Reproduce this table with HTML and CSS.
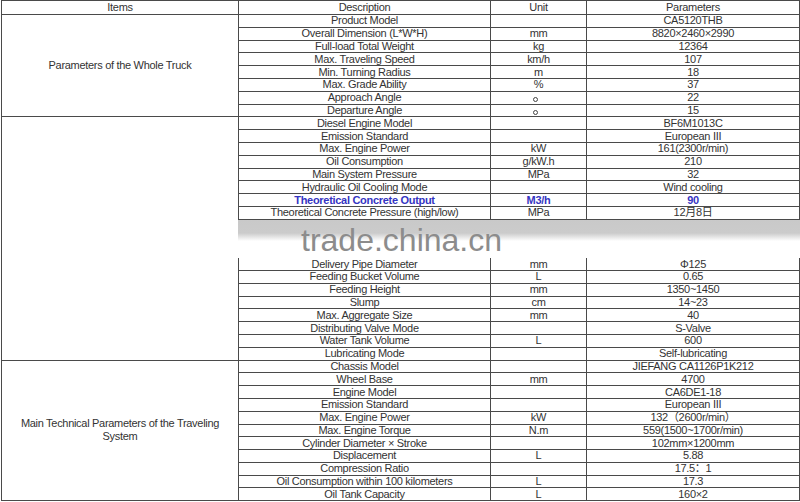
FILE: index.html
```html
<!DOCTYPE html>
<html>
<head>
<meta charset="utf-8">
<link rel="stylesheet" href="styles.css">
</head>
<body>
<div class="sheet">
  <div class="c">Items</div><div class="c d">Description</div><div class="c">Unit</div><div class="c">Parameters</div>

  <div class="c item g1">Parameters of the Whole Truck</div>
  <div class="c d">Product Model</div><div class="c"></div><div class="c">CA5120THB</div>
  <div class="c d">Overall Dimension (L*W*H)</div><div class="c">mm</div><div class="c">8820×2460×2990</div>
  <div class="c d">Full-load Total Weight</div><div class="c">kg</div><div class="c">12364</div>
  <div class="c d">Max. Traveling Speed</div><div class="c">km/h</div><div class="c">107</div>
  <div class="c d">Min. Turning Radius</div><div class="c">m</div><div class="c">18</div>
  <div class="c d">Max. Grade Ability</div><div class="c">%</div><div class="c">37</div>
  <div class="c d">Approach Angle</div><div class="c"><span class="deg" title="。"></span></div><div class="c">22</div>
  <div class="c d">Departure Angle</div><div class="c"><span class="deg" title="。"></span></div><div class="c">15</div>

  <div class="c item g2"></div>
  <div class="c d">Diesel Engine Model</div><div class="c"></div><div class="c">BF6M1013C</div>
  <div class="c d">Emission Standard</div><div class="c"></div><div class="c">European III</div>
  <div class="c d">Max. Engine Power</div><div class="c">kW</div><div class="c">161(2300r/min)</div>
  <div class="c d">Oil Consumption</div><div class="c">g/kW.h</div><div class="c">210</div>
  <div class="c d">Main System Pressure</div><div class="c">MPa</div><div class="c">32</div>
  <div class="c d">Hydraulic Oil Cooling Mode</div><div class="c"></div><div class="c">Wind cooling</div>
  <div class="c d hl">Theoretical Concrete Output</div><div class="c hl">M3/h</div><div class="c hl">90</div>
  <div class="c d">Theoretical Concrete Pressure (high/low)</div><div class="c">MPa</div><div class="c">12月8日</div>
  <div class="band"><span class="wm">trade.china.cn</span></div>
  <div class="c d">Delivery Pipe Diameter</div><div class="c">mm</div><div class="c">Φ125</div>
  <div class="c d">Feeding Bucket Volume</div><div class="c">L</div><div class="c">0.65</div>
  <div class="c d">Feeding Height</div><div class="c">mm</div><div class="c">1350~1450</div>
  <div class="c d">Slump</div><div class="c">cm</div><div class="c">14~23</div>
  <div class="c d">Max. Aggregate Size</div><div class="c">mm</div><div class="c">40</div>
  <div class="c d">Distributing Valve Mode</div><div class="c"></div><div class="c">S-Valve</div>
  <div class="c d">Water Tank Volume</div><div class="c">L</div><div class="c">600</div>
  <div class="c d">Lubricating Mode</div><div class="c"></div><div class="c">Self-lubricating</div>

  <div class="c item g3">Main Technical Parameters of the Traveling<br>System</div>
  <div class="c d">Chassis Model</div><div class="c"></div><div class="c">JIEFANG CA1126P1K212</div>
  <div class="c d">Wheel Base</div><div class="c">mm</div><div class="c">4700</div>
  <div class="c d">Engine Model</div><div class="c"></div><div class="c">CA6DE1-18</div>
  <div class="c d">Emission Standard</div><div class="c"></div><div class="c">European III</div>
  <div class="c d">Max. Engine Power</div><div class="c">kW</div><div class="c">132（2600r/min）</div>
  <div class="c d">Max. Engine Torque</div><div class="c">N.m</div><div class="c">559(1500~1700r/min)</div>
  <div class="c d">Cylinder Diameter × Stroke</div><div class="c"></div><div class="c">102mm×1200mm</div>
  <div class="c d">Displacement</div><div class="c">L</div><div class="c">5.88</div>
  <div class="c d">Compression Ratio</div><div class="c"></div><div class="c">17.5：1</div>
  <div class="c d">Oil Consumption within 100 kilometers</div><div class="c">L</div><div class="c">17.3</div>
  <div class="c d">Oil Tank Capacity</div><div class="c">L</div><div class="c">160×2</div>
</div>
</body>
</html>
```

FILE: styles.css
```css
html, body {
  margin: 0;
  padding: 0;
  background: #ffffff;
}

.sheet {
  display: grid;
  grid-template-columns: 236px 251px 95px 212px;
  grid-template-rows: 13px repeat(38, 11.8px);
  gap: 1px;
  padding: 1px;
  width: 797px;
  margin-left: 1px;
  background: #4a4a4a;
  font-family: "Liberation Sans", Arial, "Noto Sans CJK SC", sans-serif;
  font-size: 11px;
  letter-spacing: -0.3px;
  color: #333333;
}

.c {
  background: #ffffff;
  display: flex;
  align-items: center;
  justify-content: center;
  text-align: center;
  line-height: 11px;
  white-space: nowrap;
  overflow: hidden;
}

.d {
  grid-column: 2;
}

.item {
  grid-column: 1;
  line-height: 13px;
  white-space: normal;
}

.g1 { grid-row: span 8; }
.g2 { grid-row: span 19; }
.g3 { grid-row: span 11; }

.hl {
  color: #3535c2;
  font-weight: bold;
}

.deg {
  display: block;
  width: 3px;
  height: 3px;
  border: 1px solid #444444;
  border-radius: 50%;
  margin: 4px 7px 0 0;
}

.band {
  grid-column: 2 / 5;
  grid-row: span 3;
  margin: 0 -1px -1px -1px;
  background: linear-gradient(to bottom, #c9c9c9 0px, #cbcbcb 13px, #ffffff 21px, #ffffff 100%);
  padding: 4px 0 0 63px;
  overflow: visible;
}

.wm {
  display: block;
  font-family: "Liberation Sans", Arial, sans-serif;
  font-size: 32px;
  line-height: 32px;
  letter-spacing: 0;
  color: #8c8c8c;
  white-space: nowrap;
}
```
